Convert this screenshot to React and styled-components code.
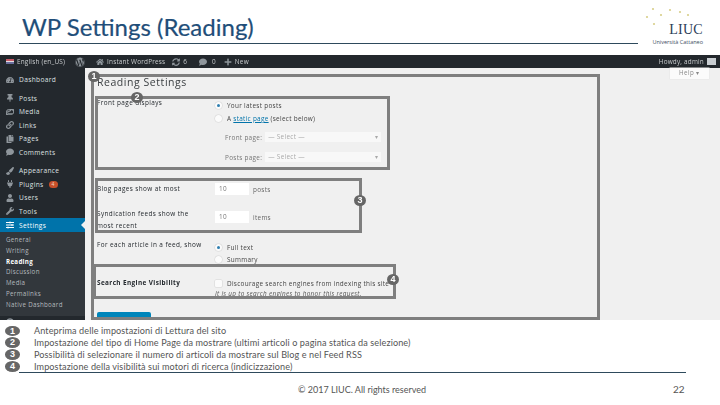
import styled, { createGlobalStyle } from "styled-components";
import {
  FaWordpress, FaHome, FaSyncAlt, FaComment, FaPlus, FaTachometerAlt, FaThumbtack, FaImages,
  FaLink, FaCopy, FaPaintBrush, FaPlug, FaUser, FaWrench, FaSlidersH, FaArrowCircleLeft,
} from "react-icons/fa";

const Global = createGlobalStyle`
  html, body { margin: 0; padding: 0; background: #fff; }
  body { width: 720px; height: 405px; overflow: hidden; font-family: "Open Sans", "Liberation Sans", sans-serif; }
`;

const Slide = styled.div`
  width: 720px;
  height: 405px;
  display: flex;
  flex-direction: column;
  overflow: hidden;
`;

const Header = styled.header`
  height: 55px;
  display: flex;
  align-items: flex-start;
  flex-shrink: 0;
`;
const TitleBlock = styled.div`
  width: 619px;
  height: 44px;
  margin-left: 19px;
  padding-left: 3px;
  box-sizing: border-box;
  border-bottom: 1px solid #2e4a5c;
`;
const Title = styled.h1`
  margin: 0;
  padding-top: 10px;
  font-family: Lato, "Open Sans", sans-serif;
  font-size: 24px;
  line-height: 34px;
  font-weight: 400;
  -webkit-text-stroke: 0.2px #1f4e79;
  color: #1f4e79;
`;
const Logo = styled.div`
  margin-left: 5px;
  width: 62px;
  padding-top: 7px;
  height: 48px;
  box-sizing: border-box;
  text-align: right;
`;
const LogoStars = styled.svg`
  display: block;
  width: 50px;
  height: 22px;
`;
const LogoName = styled.div`
  margin-top: -7px;
  padding-right: 2px;
  font-family: "Liberation Serif", serif;
  font-size: 14px;
  line-height: 15px;
  letter-spacing: 0.3px;
  color: #2b3d57;
`;
const LogoSub = styled.div`
  padding-top: 1px;
  white-space: nowrap;
  font-size: 5.5px;
  line-height: 8px;
  padding-right: 2px;
  color: #3d4d63;
`;

const Shot = styled.section`
  position: relative;
  height: 265px;
  flex-shrink: 0;
  overflow: hidden;
  background: #f0f0f0;
`;
const AdminBar = styled.div`
  height: 13px;
  background: #23282d;
  display: flex;
  align-items: center;
  color: #c9ccce;
  font-size: 6.4px;
  padding: 0 4px 0 6px;
  filter: blur(0.3px);
`;
const BarItem = styled.span`
  display: flex;
  align-items: center;
  gap: 3px;
  white-space: nowrap;
  margin-left: ${(p) => p.$gap || 0}px;
  letter-spacing: 0.2px;
  svg { color: #8f969c; font-size: ${(p) => p.$icon || 8}px; }
`;
const Flag = styled.span`
  width: 8px;
  height: 5px;
  background: linear-gradient(#c45a66 0 40%, #e6dfe2 40% 70%, #6a6f9c 70%);
`;
const Avatar = styled.span`
  width: 9px;
  height: 7px;
  background: #c9ced2;
`;
const Spacer = styled.span`
  flex: 1;
`;

const ShotBody = styled.div`
  display: flex;
  height: 252px;
  filter: blur(0.3px);
`;
const Sidebar = styled.nav`
  width: 85px;
  flex-shrink: 0;
  background: #23282d;
  padding-top: 5px;
  box-sizing: border-box;
  overflow: hidden;
`;
const NavItem = styled.div`
  height: ${(p) => p.$h || 13.5}px;
  margin-top: ${(p) => p.$top || 0}px;
  display: flex;
  align-items: center;
  gap: 5px;
  padding-left: 6px;
  font-size: 6.6px;
  letter-spacing: 0.35px;
  color: ${(p) => (p.$active ? "#fff" : "#dfe1e2")};
  background: ${(p) => (p.$active ? "#0073aa" : "transparent")};
  position: relative;
  svg { width: 8px; height: 8px; color: ${(p) => (p.$active ? "#fff" : "#8f969c")}; flex-shrink: 0; }
`;
const Notch = styled.span`
  position: absolute;
  right: 0;
  top: 3px;
  border: 4px solid transparent;
  border-right-color: #f0f0f0;
  border-left-width: 0;
`;
const Pill = styled.span`
  width: 9px;
  height: 7px;
  border-radius: 4px;
  background: #c8502a;
  color: #f3d9c8;
  font-size: 5px;
  line-height: 7px;
  text-align: center;
`;
const SubMenu = styled.div`
  background: #32373c;
  padding: 3px 0 5px 6px;
`;
const SubItem = styled.div`
  height: 10.8px;
  line-height: 10.8px;
  font-size: 6.2px;
  letter-spacing: 0.3px;
  font-weight: ${(p) => (p.$current ? 700 : 400)};
  color: ${(p) => (p.$current ? "#fff" : "#b4b9be")};
`;
const Collapse = styled(NavItem)`
  color: #b4b9be;
`;

const Content = styled.main`
  flex: 1;
  padding: 7px 0 0 12px;
  color: #444;
  font-size: 6.4px;
  letter-spacing: 0.3px;
`;
const PageTitle = styled.h2`
  margin: 0 0 8px;
  font-size: 10.5px;
  line-height: 14px;
  font-weight: 400;
  letter-spacing: 0.55px;
  color: #3c4043;
`;
const Row = styled.div`
  display: grid;
  grid-template-columns: 118px 1fr;
  height: ${(p) => p.$h}px;
  width: 420px;
`;
const Label = styled.div`
  font-weight: ${(p) => (p.$strong ? 700 : 500)};
  color: #23282d;
  line-height: 12px;
  letter-spacing: 0.4px;
  width: 108px;
  white-space: ${(p) => (p.$wrap ? "normal" : "nowrap")};
`;
const Field = styled.div`
  display: flex;
  flex-direction: column;
  padding-top: ${(p) => p.$top || 0}px;
`;
const Check = styled.div`
  height: ${(p) => p.$h || 13}px;
  display: flex;
  align-items: center;
  gap: 5px;
  white-space: nowrap;
`;
const Radio = styled.span`
  width: 7px;
  height: 7px;
  border-radius: ${(p) => (p.$square ? "1px" : "50%")};
  background: #fbfbfb;
  box-shadow: 0 0 0 0.5px #d4d4d4;
  display: flex;
  align-items: center;
  justify-content: center;
  &::after {
    content: "";
    width: 3px;
    height: 3px;
    border-radius: 50%;
    background: ${(p) => (p.$on ? "#2f7fb0" : "transparent")};
  }
`;
const Link = styled.span`
  color: #0073aa;
  text-decoration: underline;
`;
const SelectRow = styled.div`
  display: flex;
  align-items: center;
  height: 20px;
  color: #777;
  padding-left: 10px;
  white-space: nowrap;
  margin-top: ${(p) => p.$top || 0}px;
`;
const Select = styled.span`
  margin-left: 3px;
  width: 116px;
  height: 10px;
  line-height: 10px;
  padding: 0 3px;
  box-sizing: border-box;
  background: #f8f8f8;
  color: #aaa;
  display: flex;
  justify-content: space-between;
`;
const NumberRow = styled.div`
  display: flex;
  align-items: center;
  gap: 4px;
  height: 12px;
  color: #666;
  margin-top: ${(p) => p.$top || 0}px;
`;
const NumberBox = styled.span`
  width: 34px;
  height: 12px;
  line-height: 12px;
  padding-left: 4px;
  box-sizing: border-box;
  background: #fff;
  color: #777;
`;
const Hint = styled.div`
  font-style: italic;
  color: #555;
  line-height: 10px;
  white-space: nowrap;
`;
const SaveButton = styled.div`
  margin-top: 11px;
  width: 54px;
  height: 12px;
  background: #0085ba;
  border-radius: 2px;
`;

const Frame = styled.div`
  position: absolute;
  left: ${(p) => p.$x}px;
  top: ${(p) => p.$y}px;
  width: ${(p) => p.$w}px;
  height: ${(p) => p.$h}px;
  box-sizing: border-box;
  border: 3px solid #7f7f7f;
`;
const HelpTab = styled.div`
  position: absolute;
  left: 670px;
  top: 13px;
  width: 39px;
  height: 11px;
  background: #fbfbfb;
  box-shadow: 0 0 0 0.5px #e6e6e6;
  font-size: 6.2px;
  line-height: 10px;
  letter-spacing: 0.5px;
  text-align: center;
  color: #888;
`;
const Badge = styled.span`
  width: ${(p) => p.$w || 12}px;
  height: ${(p) => p.$h || 11}px;
  border-radius: 50%;
  background: #666;
  color: #fff;
  font-size: 9px;
  font-weight: 700;
  line-height: ${(p) => p.$h || 11}px;
  text-align: center;
  flex-shrink: 0;
  font-family: "Liberation Sans", sans-serif;
`;
const PinnedBadge = styled(Badge)`
  position: absolute;
  left: ${(p) => p.$x}px;
  top: ${(p) => p.$y}px;
`;

const Legend = styled.section`
  padding: 5px 0 0 5px;
  display: flex;
  flex-direction: column;
  flex-shrink: 0;
`;
const LegendRow = styled.div`
  display: flex;
  align-items: center;
  height: 11.8px;
  gap: 14px;
  white-space: nowrap;
  font-family: Lato, "Open Sans", sans-serif;
  font-size: 9.1px;
  letter-spacing: 0.1px;
  color: #555;
`;
const Rule = styled.div`
  height: 1px;
  margin: 0 34px 0 19px;
  background: #2e4a5c;
  flex-shrink: 0;
`;
const Footer = styled.footer`
  display: grid;
  grid-template-columns: 298px 375px auto;
  padding-top: 10px;
  font-family: Lato, "Open Sans", sans-serif;
  font-size: 9px;
  line-height: 14px;
  color: #555;
`;
const Copyright = styled.span`
  grid-column: 2;
`;
const PageNo = styled.span`
  grid-column: 3;
  margin-top: -1px;
  font-size: 10px;
`;

const nav = [
  [FaThumbtack, "Posts", 13.5, 5],
  [FaImages, "Media"],
  [FaLink, "Links"],
  [FaCopy, "Pages"],
  [FaComment, "Comments"],
  [FaPaintBrush, "Appearance", 13.5, 5],
  [FaPlug, "Plugins"],
  [FaUser, "Users"],
  [FaWrench, "Tools"],
];
const sub = ["General", "Writing", "Reading", "Discussion", "Media", "Permalinks", "Native Dashboard"];
const legend = [
  "Anteprima delle impostazioni di Lettura del sito",
  "Impostazione del tipo di Home Page da mostrare (ultimi articoli o pagina statica da selezione)",
  "Possibilità di selezionare il numero di articoli da mostrare sul Blog e nel Feed RSS",
  "Impostazione della visibilità sui motori di ricerca (indicizzazione)",
];

export default function App() {
  return (
    <Slide>
      <Global />
      <Header>
        <TitleBlock>
          <Title>WP Settings (Reading)</Title>
        </TitleBlock>
        <Logo>
          <LogoStars viewBox="0 0 50 22">
            {[[4, 10], [10, 2], [18, 8], [27, 3], [37, 5], [45, 8], [11, 17]].map(([x, y], i) => (
              <circle key={i} cx={x} cy={y} r="1.1" fill="#d8cf8a" />
            ))}
          </LogoStars>
          <LogoName>LIUC</LogoName>
          <LogoSub>Università Cattaneo</LogoSub>
        </Logo>
      </Header>

      <Shot>
        <AdminBar>
          <BarItem><Flag />English (en_US)</BarItem>
          <BarItem $gap={10} $icon={10}><FaWordpress /></BarItem>
          <BarItem $gap={11}><FaHome />Instant WordPress</BarItem>
          <BarItem $gap={7}><FaSyncAlt />6</BarItem>
          <BarItem $gap={12}><FaComment />&nbsp;0</BarItem>
          <BarItem $gap={8}><FaPlus />New</BarItem>
          <Spacer />
          <BarItem>Howdy, admin<Avatar /></BarItem>
        </AdminBar>
        <ShotBody>
          <Sidebar>
            <NavItem><FaTachometerAlt />Dashboard</NavItem>
            {nav.map(([Icon, text, h, top]) => (
              <NavItem key={text} $h={h} $top={top}>
                <Icon />
                {text}
                {text === "Plugins" && <Pill>4</Pill>}
              </NavItem>
            ))}
            <NavItem $active $h={14}><FaSlidersH />Settings<Notch /></NavItem>
            <SubMenu>
              {sub.map((s) => (
                <SubItem key={s} $current={s === "Reading"}>{s}</SubItem>
              ))}
            </SubMenu>
            <Collapse><FaArrowCircleLeft />Collapse menu</Collapse>
          </Sidebar>
          <Content>
            <PageTitle>Reading Settings</PageTitle>
            <Row $h={86}>
              <Label>Front page displays</Label>
              <Field $top={2}>
                <Check><Radio $on /><span>Your latest posts</span></Check>
                <Check><Radio /><span>A <Link>static page</Link> (select below)</span></Check>
                <SelectRow $top={2}>Front page:<Select>— Select —<span>▾</span></Select></SelectRow>
                <SelectRow>Posts page:<Select>— Select —<span>▾</span></Select></SelectRow>
              </Field>
            </Row>
            <Row $h={25}>
              <Label>Blog pages show at most</Label>
              <Field><NumberRow><NumberBox>10</NumberBox>posts</NumberRow></Field>
            </Row>
            <Row $h={31}>
              <Label $wrap>Syndication feeds show the most recent</Label>
              <Field><NumberRow $top={3}><NumberBox>10</NumberBox>items</NumberRow></Field>
            </Row>
            <Row $h={38}>
              <Label>For each article in a feed, show</Label>
              <Field $top={2}>
                <Check $h={12}><Radio $on /><span>Full text</span></Check>
                <Check $h={12}><Radio /><span>Summary</span></Check>
              </Field>
            </Row>
            <Row $h={24}>
              <Label $strong>Search Engine Visibility</Label>
              <Field>
                <Check $h={12}><Radio $square /><span>Discourage search engines from indexing this site</span></Check>
                <Hint>It is up to search engines to honor this request.</Hint>
              </Field>
            </Row>
            <SaveButton />
          </Content>
        </ShotBody>
        <HelpTab>Help ▾</HelpTab>
        <Frame $x={91} $y={19} $w={509} $h={246} />
        <Frame $x={95} $y={41} $w={295} $h={74} />
        <Frame $x={95} $y={123} $w={267} $h={55} />
        <Frame $x={93} $y={209} $w={303} $h={35} />
        <PinnedBadge $x={88} $y={16}>1</PinnedBadge>
        <PinnedBadge $x={131} $y={37}>2</PinnedBadge>
        <PinnedBadge $x={354} $y={140}>3</PinnedBadge>
        <PinnedBadge $x={387} $y={219}>4</PinnedBadge>
      </Shot>

      <Legend>
        {legend.map((text, i) => (
          <LegendRow key={i}>
            <Badge $w={15} $h={10.5}>{i + 1}</Badge>
            {text}
          </LegendRow>
        ))}
      </Legend>
      <Rule />
      <Footer>
        <Copyright>© 2017 LIUC. All rights reserved</Copyright>
        <PageNo>22</PageNo>
      </Footer>
    </Slide>
  );
}
